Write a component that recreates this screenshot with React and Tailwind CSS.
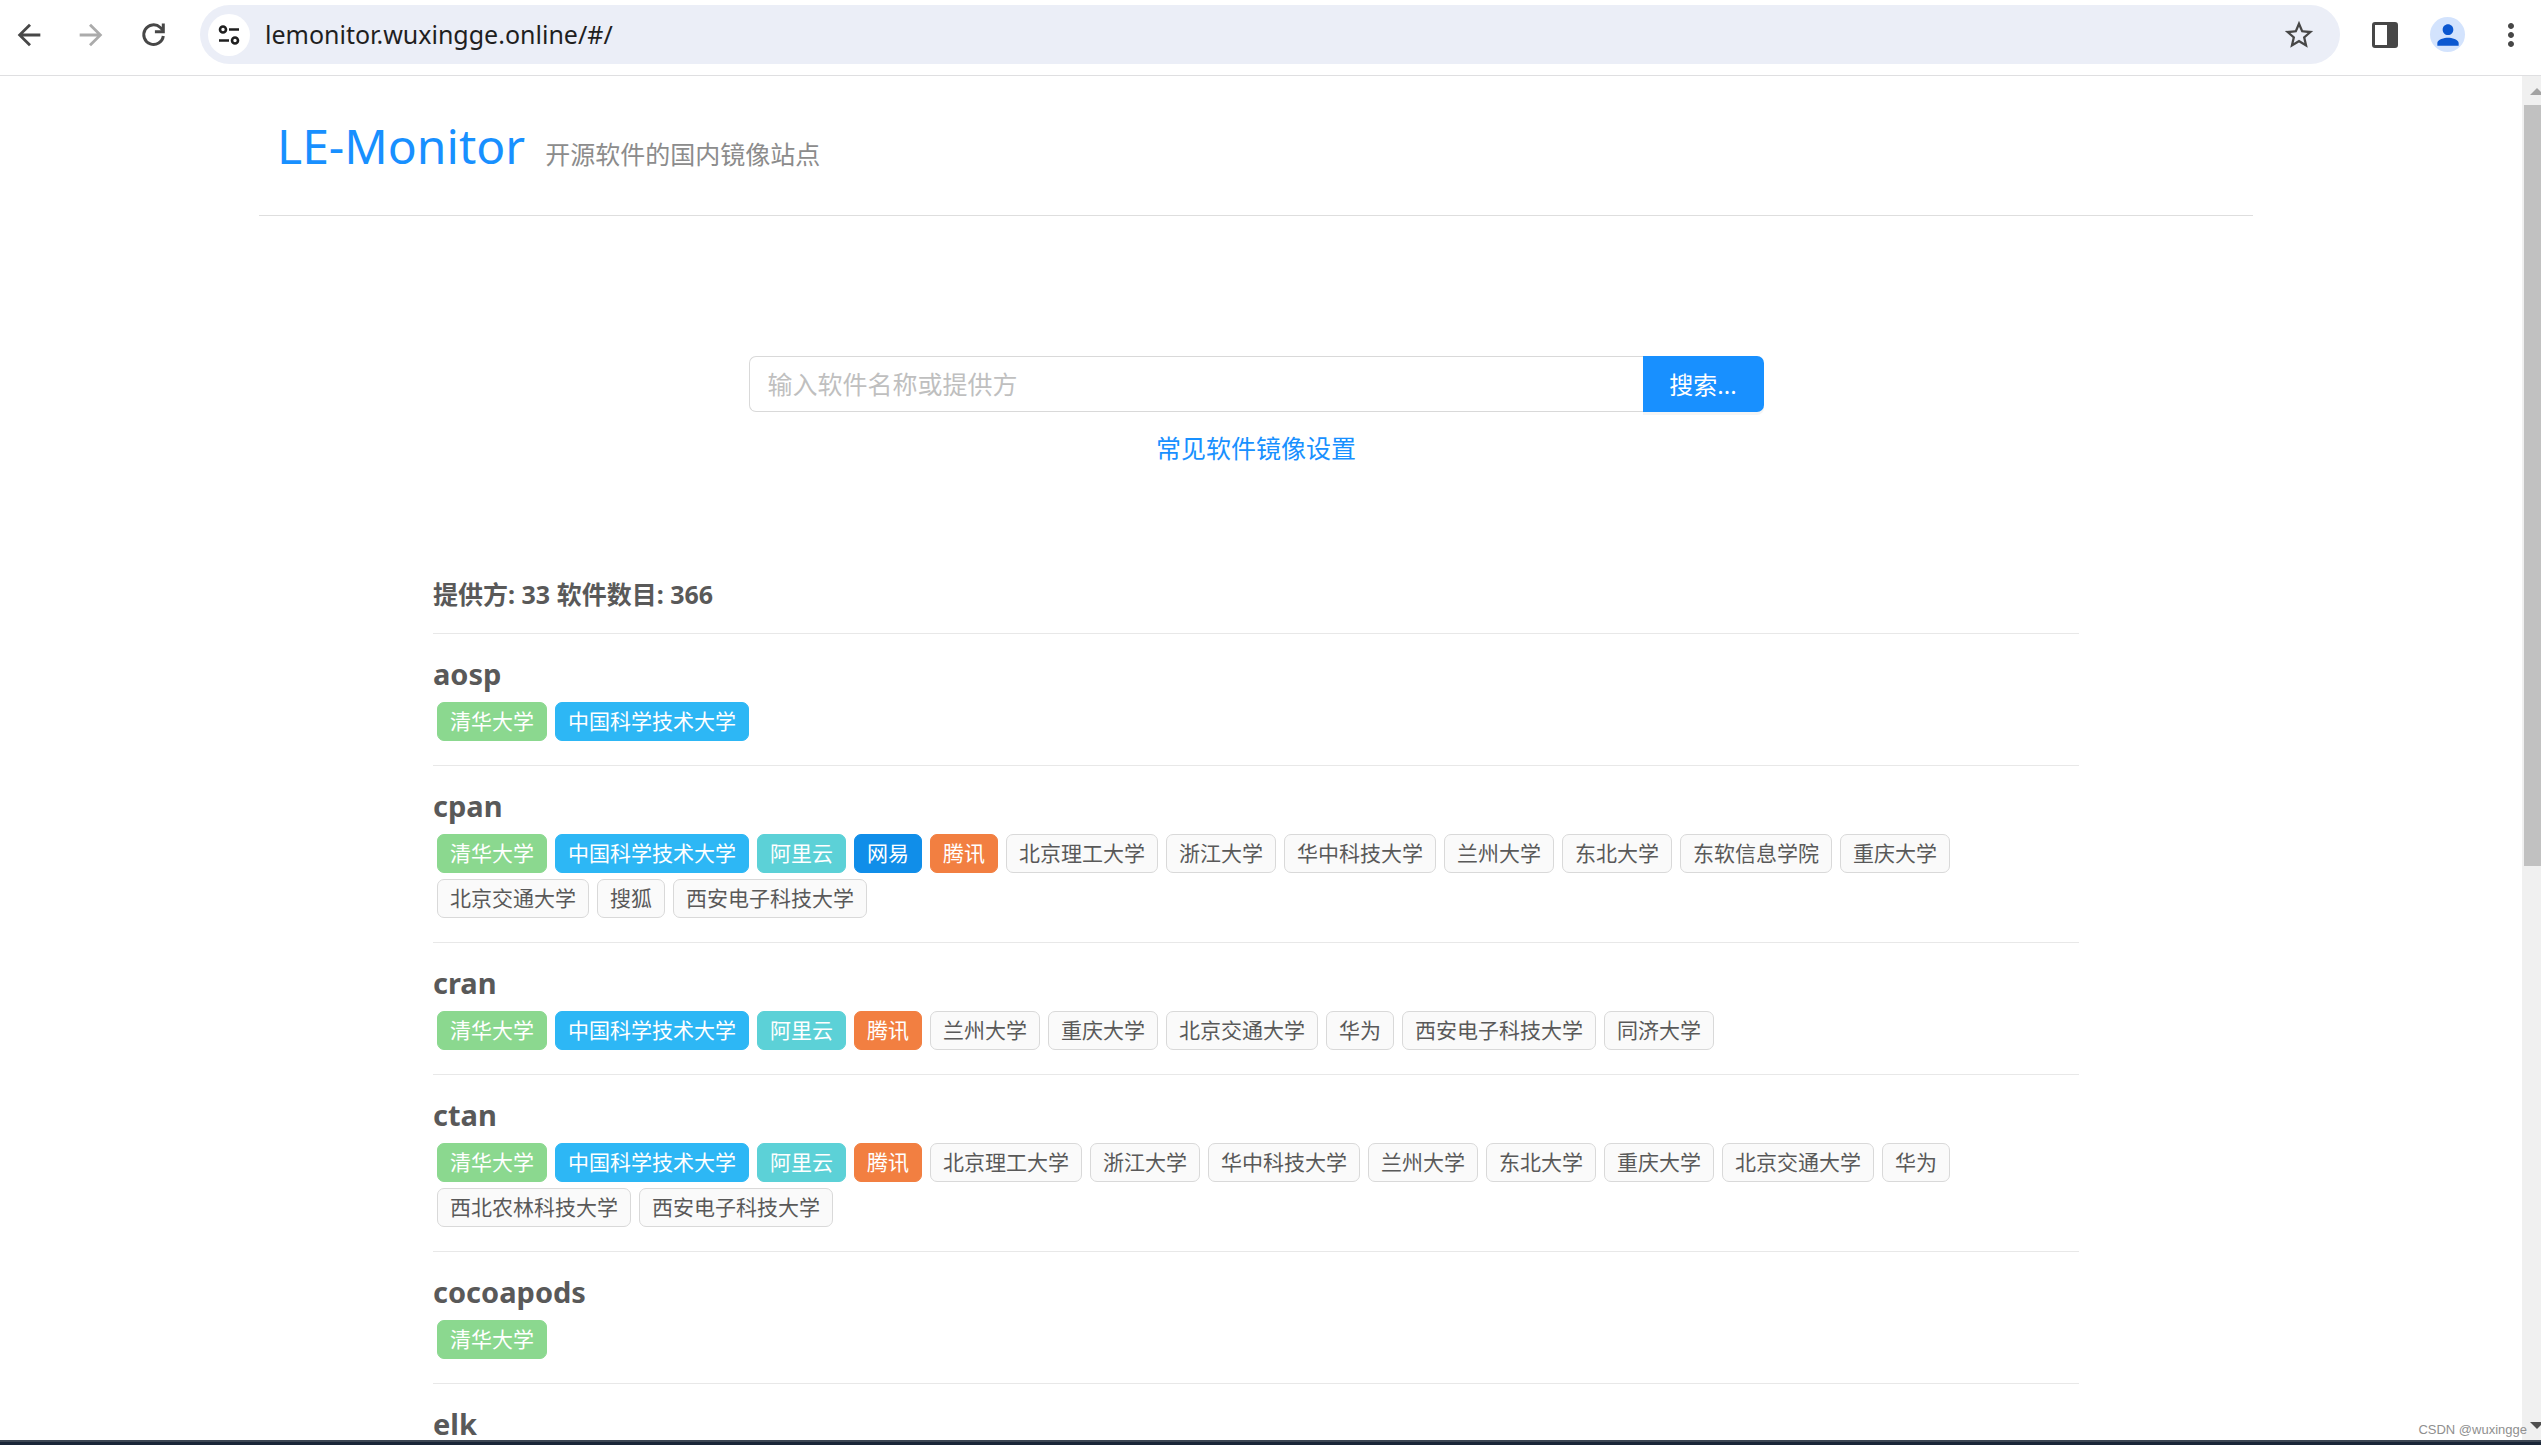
import { useState } from "react";
import { MdArrowBack, MdArrowForward, MdStarBorder, MdPerson, MdMoreVert } from "react-icons/md";

const tagColors = {
  清华大学: "border-[#8bd88f] bg-[#8bd88f] text-white",
  中国科学技术大学: "border-[#2db7f5] bg-[#2db7f5] text-white",
  阿里云: "border-[#5cd1d7] bg-[#5cd1d7] text-white",
  网易: "border-[#108ee9] bg-[#108ee9] text-white",
  腾讯: "border-[#f27f41] bg-[#f27f41] text-white",
};

const softwares = [
  { name: "aosp", providers: ["清华大学", "中国科学技术大学"] },
  {
    name: "cpan",
    providers: [
      "清华大学", "中国科学技术大学", "阿里云", "网易", "腾讯", "北京理工大学", "浙江大学", "华中科技大学",
      "兰州大学", "东北大学", "东软信息学院", "重庆大学", "北京交通大学", "搜狐", "西安电子科技大学",
    ],
  },
  {
    name: "cran",
    providers: [
      "清华大学", "中国科学技术大学", "阿里云", "腾讯", "兰州大学", "重庆大学", "北京交通大学", "华为",
      "西安电子科技大学", "同济大学",
    ],
  },
  {
    name: "ctan",
    providers: [
      "清华大学", "中国科学技术大学", "阿里云", "腾讯", "北京理工大学", "浙江大学", "华中科技大学", "兰州大学",
      "东北大学", "重庆大学", "北京交通大学", "华为", "西北农林科技大学", "西安电子科技大学",
    ],
  },
  { name: "cocoapods", providers: ["清华大学"] },
  { name: "elk", providers: [] },
];

function ReloadIcon() {
  return (
    <svg viewBox="0 0 34 34" className="size-[34px]" fill="none" stroke="#474747" strokeWidth="3">
      <path d="M27.3 18a9.8 9.8 0 1 1-3-8.5l2.7 2.7" />
      <path d="M27.3 5.5v8.2h-8.4" />
    </svg>
  );
}

function TuneIcon() {
  return (
    <svg viewBox="0 0 24 24" className="size-6" fill="none" stroke="#1f1f1f" strokeWidth="2.6">
      <circle cx="6" cy="6.5" r="3" />
      <path d="M12 6.5h10M2 17.5h10" />
      <circle cx="18" cy="17.5" r="3" />
    </svg>
  );
}

function SidePanelIcon() {
  return (
    <svg viewBox="0 0 26 26" className="size-[26px]">
      <rect x="1.5" y="1.5" width="23" height="23" rx="1.5" fill="none" stroke="#474747" strokeWidth="3" />
      <path d="M15 1h9v24h-9z" fill="#474747" />
    </svg>
  );
}

function BrowserBar() {
  const [url, setUrl] = useState("lemonitor.wuxingge.online/#/");

  return (
    <header className="flex h-[76px] shrink-0 items-start border-b border-[#dfdfe1] bg-white pt-[5px] pr-3 pl-3">
      <div className="flex h-[59px] items-center gap-7 text-[#474747]">
        <button type="button" aria-label="Back"><MdArrowBack size={34} /></button>
        <button type="button" aria-label="Forward" className="text-[#ababab]"><MdArrowForward size={34} /></button>
        <button type="button" aria-label="Reload"><ReloadIcon /></button>
      </div>

      <div className="ml-[30px] flex h-[59px] flex-1 items-center rounded-full bg-[#ebeef7] pr-6 pl-2">
        <button
          type="button"
          aria-label="Site information"
          className="flex size-[42px] items-center justify-center rounded-full bg-white"
        >
          <TuneIcon />
        </button>
        <input
          aria-label="Address"
          value={url}
          onChange={(e) => setUrl(e.target.value)}
          className="ml-[15px] min-w-0 flex-1 bg-transparent text-[25px] text-[#1f1f1f] outline-none"
        />
        <button type="button" aria-label="Bookmark" className="text-[#474747]"><MdStarBorder size={34} /></button>
      </div>

      <div className="ml-8 flex h-[59px] items-center text-[#474747]">
        <button type="button" aria-label="Side panel"><SidePanelIcon /></button>
        <button
          type="button"
          aria-label="Profile"
          className="mr-7 ml-8 flex size-[35px] items-center justify-center rounded-full bg-[#d3e3fd] text-[#0b57d0]"
        >
          <MdPerson size={32} />
        </button>
        <button type="button" aria-label="Menu"><MdMoreVert size={36} /></button>
      </div>
    </header>
  );
}

function Tag({ name }) {
  return (
    <li
      className={`flex h-[39px] items-center rounded-[7px] border px-3 text-[21px] ${
        tagColors[name] || "border-[#d9d9d9] bg-[#fafafa]"
      }`}
    >
      {name}
    </li>
  );
}

function ScrollBar() {
  return (
    <div className="flex w-[19px] shrink-0 flex-col overflow-hidden bg-[#f0f0f0] pl-0.5">
      <svg viewBox="0 0 17 29" className="h-[29px] w-[17px] shrink-0">
        <path d="M6 19l7-7 7 7z" fill="#a3a3a3" />
      </svg>
      <div className="h-[761px] shrink-0 bg-[#c1c1c1]" />
      <div className="flex-1" />
      <svg viewBox="0 0 17 24" className="h-6 w-[17px] shrink-0">
        <path d="M6 6h14l-7 7z" fill="#505050" />
      </svg>
    </div>
  );
}

export default function App() {
  const [keyword, setKeyword] = useState("");

  return (
    <div className="relative flex h-screen flex-col overflow-hidden bg-white font-['Noto_Sans','Noto_Sans_CJK_SC',sans-serif] text-[#595959]">
      <BrowserBar />

      <div className="flex min-h-0 flex-1">
        <main className="min-w-0 flex-1 overflow-hidden pr-[269px] pl-[259px]">
          {/* Title */}
          <div className="flex h-[140px] items-baseline gap-5 border-b border-[#dedede] px-[18px] pt-[34px]">
            <h1 className="text-[48px] leading-[72px] text-[#1890ff]">LE-Monitor</h1>
            <p className="text-[25px] text-[#8c8c8c]">开源软件的国内镜像站点</p>
          </div>

          <div className="px-[174px]">
            {/* Search */}
            <form
              onSubmit={(e) => e.preventDefault()}
              className="mx-auto mt-[140px] flex h-14 max-w-[1015px] text-[25px]"
            >
              <input
                aria-label="输入软件名称或提供方"
                placeholder="输入软件名称或提供方"
                value={keyword}
                onChange={(e) => setKeyword(e.target.value)}
                className="min-w-0 flex-1 rounded-l-[7px] border border-r-0 border-[#d9d9d9] px-[18px] pt-0.5 outline-none placeholder:text-[#bfbfbf]"
              />
              <button
                type="submit"
                className="w-[121px] rounded-r-[7px] bg-[#1890ff] pt-0.5 text-[24px] text-white shadow-[0_3px_0_rgba(0,0,0,0.04)]"
              >
                搜索...
              </button>
            </form>
            <div className="mt-4 text-center text-[25px] leading-10">
              <a href="#/config" className="text-[#1890ff]">常见软件镜像设置</a>
            </div>

            {/* Software list */}
            <h2 className="mt-[106px] border-b border-[#e8e8e8] pb-[19px] text-[25px] leading-10 font-bold">
              提供方: 33 软件数目: 366
            </h2>
            <ul>
              {softwares.map((item) => (
                <li key={item.name} className="border-b border-[#e8e8e8] pt-[19px] pb-6">
                  <h3 className="mb-[7px] text-[29px] leading-[42px] font-bold">{item.name}</h3>
                  <ul className="flex flex-wrap gap-x-2 gap-y-1.5 pl-1">
                    {item.providers.map((name) => (
                      <Tag key={name} name={name} />
                    ))}
                  </ul>
                </li>
              ))}
            </ul>
          </div>
        </main>
        <ScrollBar />
      </div>

      <div className="h-[5px] shrink-0 border-t-2 border-[#3c4653] bg-[#1a2638]" />

      {/* Watermark */}
      <span className="absolute right-[14px] bottom-1.5 font-['Liberation_Sans'] text-[13px] text-[#8f8f8f]">
        CSDN @wuxingge
      </span>
    </div>
  );
}
